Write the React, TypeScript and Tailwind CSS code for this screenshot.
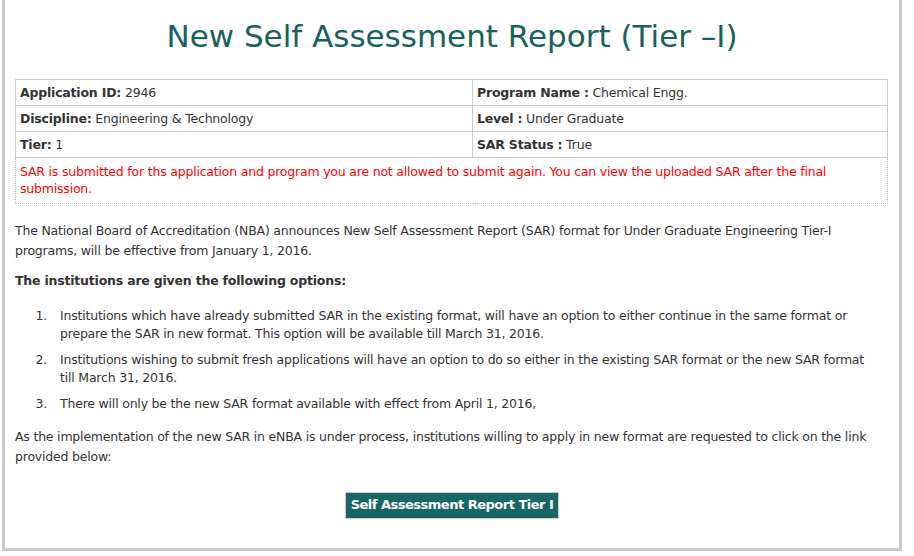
import React from "react";

const items = [
  "Institutions which have already submitted SAR in the existing format, will have an option to either continue in the same format or prepare the SAR in new format. This option will be available till March 31, 2016.",
  "Institutions wishing to submit fresh applications will have an option to do so either in the existing SAR format or the new SAR format till March 31, 2016.",
  "There will only be the new SAR format available with effect from April 1, 2016,",
];

export default function App() {
  return (
    <div className="w-[914px] h-[556px] bg-white overflow-hidden" style={{ fontFamily: '"DejaVu Sans", Verdana, sans-serif' }}>
      <div className="ml-[2px] w-[900px] h-[551px] border-x-[3px] border-b-[3px] border-[#c8c8c8] px-[10px] text-[12.5px] tracking-[-0.2px] text-[#333]">
        <h1 className="text-center text-[31px] tracking-normal leading-[36px] text-[#17625f] pt-[18px] pb-[25px]">
          New Self Assessment Report (Tier –I)
        </h1>
        <table className="w-[873px] border-collapse">
          <tbody>
            <tr className="h-[26px]">
              <td className="border border-[#cccccc] px-[4px] pt-[1px] w-[457px]"><b>Application ID:</b> 2946</td>
              <td className="border border-[#cccccc] px-[4px] pt-[1px]"><b>Program Name :</b> Chemical Engg.</td>
            </tr>
            <tr className="h-[26px]">
              <td className="border border-[#cccccc] px-[4px] pt-[1px]"><b>Discipline:</b> Engineering &amp; Technology</td>
              <td className="border border-[#cccccc] px-[4px] pt-[1px]"><b>Level :</b> Under Graduate</td>
            </tr>
            <tr className="h-[26px]">
              <td className="border border-[#cccccc] px-[4px] pt-[1px]"><b>Tier:</b> 1</td>
              <td className="border border-[#cccccc] px-[4px] pt-[1px]"><b>SAR Status :</b> True</td>
            </tr>
            <tr>
              <td colSpan={2} className="border border-dotted border-[#bbbbbb] px-[4px] pt-[5px] pb-[6px] leading-[17px] text-[#ff0000]">
                SAR is submitted for ths application and program you are not allowed to submit again. You can view the uploaded SAR after the final submission.
              </td>
            </tr>
          </tbody>
        </table>
        <p className="mt-[17px] leading-[20px]">
          The National Board of Accreditation (NBA) announces New Self Assessment Report (SAR) format for Under Graduate Engineering Tier-I programs, will be effective from January 1, 2016.
        </p>
        <p className="mt-[10px] leading-[20px] font-bold">The institutions are given the following options:</p>
        <ol className="mt-[16px] leading-[17.5px]">
          {items.map((t, i) => (
            <li key={i} className={`flex ${i < 2 ? "mb-[9px]" : ""}`}>
              <span className="w-[32px] shrink-0 text-right">{i + 1}.</span>
              <span className="ml-[13px] pr-[20px]">{t}</span>
            </li>
          ))}
        </ol>
        <p className="mt-[14px] leading-[20px]">
          As the implementation of the new SAR in eNBA is under process, institutions willing to apply in new format are requested to click on the link provided below:
        </p>
        <div className="mt-[25px] flex justify-center">
          <button className="h-[27px] px-[5px] bg-[#186764] border border-[#cccccc] text-white font-bold text-[13px] tracking-[-0.5px]">
            Self Assessment Report Tier I
          </button>
        </div>
      </div>
    </div>
  );
}
